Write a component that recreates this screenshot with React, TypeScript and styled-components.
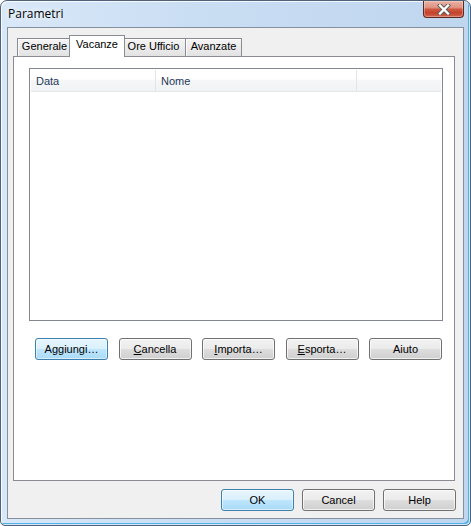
import React from "react";
import styled, { createGlobalStyle } from "styled-components";

const Global = createGlobalStyle`
  html, body { margin: 0; padding: 0; background: #ffffff; }
  body { width: 471px; height: 526px; overflow: hidden; }
  #root { width: 471px; height: 526px; }
`;

const UI_FONT = `"Liberation Sans", Arial, sans-serif`;

const Window = styled.div`
  box-sizing: border-box;
  width: 471px;
  height: 526px;
  display: flex;
  flex-direction: column;
  border: 1px solid #50627a;
  border-radius: 7px 7px 5px 5px;
  background: linear-gradient(to right, #d9e8f8 0%, #cadef3 40%, #bfd6ef 100%);
  box-shadow: inset 1px 1px 0 rgba(255, 255, 255, 0.8),
    inset -1px -1px 0 #d6e7f8, inset -3px -3px 0 -1px #4fb3ea;
  overflow: hidden;
  font-family: ${UI_FONT};
  font-size: 11px;
  color: #000;
`;

const TitleBar = styled.div`
  flex: none;
  height: 26px;
  display: flex;
  align-items: flex-start;
  padding: 0 6px 0 7px;
`;

const Title = styled.span`
  margin-top: 5px;
  font-family: "Open Sans", "Noto Sans", sans-serif;
  font-size: 12px;
  line-height: 16px;
  color: #000;
  text-shadow: 0 0 6px rgba(255, 255, 255, 0.9), 0 0 10px rgba(255, 255, 255, 0.7);
`;

const CloseButton = styled.div`
  margin-left: auto;
  box-sizing: border-box;
  width: 41px;
  height: 17px;
  border: 1px solid #5c2820;
  border-top: none;
  border-radius: 0 0 4px 4px;
  background: linear-gradient(
    #eab0a2 0%,
    #e09483 40%,
    #cf5842 52%,
    #c4412c 75%,
    #d4674f 100%
  );
  box-shadow: inset 0 0 0 1px rgba(255, 255, 255, 0.3);
  display: flex;
  align-items: center;
  justify-content: center;
`;

const Client = styled.div`
  flex: 1;
  margin: 0 6px 6px 6px;
  border: 1px solid #85909e;
  background: #f0f0f0;
  display: flex;
  flex-direction: column;
  padding: 7px 8px 7px 5px;
  min-height: 0;
`;

const TabStrip = styled.div`
  flex: none;
  height: 21px;
  display: flex;
  align-items: flex-end;
  padding-left: 4px;
  position: relative;
  z-index: 1;
`;

const Tab = styled.div<{ $w: number; $selected?: boolean; $first?: boolean }>`
  box-sizing: border-box;
  width: ${(p) => (p.$selected ? p.$w + 4 : p.$w)}px;
  height: ${(p) => (p.$selected ? 22 : 18)}px;
  margin-left: ${(p) => (p.$first ? 0 : p.$selected ? -3 : -1)}px;
  margin-right: ${(p) => (p.$selected ? -3 : 0)}px;
  margin-bottom: ${(p) => (p.$selected ? -1 : 0)}px;
  border: 1px solid #898c95;
  border-bottom: none;
  background: ${(p) =>
    p.$selected
      ? "#ffffff"
      : "linear-gradient(#f4f4f4 0%, #ececec 50%, #e2e2e2 100%)"};
  box-shadow: ${(p) =>
    p.$selected ? "none" : "inset 1px 1px 0 rgba(255,255,255,0.8)"};
  position: relative;
  z-index: ${(p) => (p.$selected ? 2 : 0)};
  text-align: center;
  line-height: ${(p) => (p.$selected ? 17 : 15)}px;
  padding-bottom: ${(p) => (p.$selected ? 4 : 2)}px;
  white-space: nowrap;
  color: #000;
`;

const Panel = styled.div`
  flex: 1;
  min-height: 0;
  border: 1px solid #898c95;
  background: #ffffff;
  padding: 11px 11px 0 15px;
  display: flex;
  flex-direction: column;
`;

const ListView = styled.div`
  flex: none;
  height: 253px;
  box-sizing: border-box;
  border: 1px solid #828790;
  padding: 1px;
  background: #ffffff;
`;

const Header = styled.div`
  display: flex;
  height: 22px;
  box-sizing: border-box;
  border-bottom: 1px solid #e5e5e5;
  background: linear-gradient(#ffffff 0%, #ffffff 45%, #f6f7f8 46%, #f1f2f4 100%);
`;

const HeaderCell = styled.div<{ $w?: number }>`
  ${(p) => (p.$w ? `width: ${p.$w}px; flex: none;` : "flex: 1;")}
  box-sizing: border-box;
  padding: 2px 0 0 5px;
  line-height: 19px;
  color: #1e395b;
  border-right: ${(p) => (p.$w ? "1px solid #e2e4e8" : "none")};
  white-space: nowrap;
`;

const ActionRow = styled.div`
  flex: none;
  margin: 17px 1px 0 6px;
  display: flex;
  justify-content: space-between;
`;

const DialogRow = styled.div`
  flex: none;
  margin: 8px -1px 0 0;
  display: flex;
  justify-content: flex-end;
  gap: 8px;
`;

const Button = styled.div<{ $default?: boolean }>`
  box-sizing: border-box;
  width: 73px;
  height: 22px;
  border: 1px solid ${(p) => (p.$default ? "#3c7fb1" : "#707070")};
  border-radius: 3px;
  background: ${(p) =>
    p.$default
      ? "linear-gradient(#e8f5fc 0%, #d9f0fc 48%, #bee6fd 52%, #a9daf6 100%)"
      : "linear-gradient(#f2f2f2 0%, #ebebeb 48%, #dddddd 52%, #cfcfcf 100%)"};
  box-shadow: inset 0 0 0 1px
    ${(p) => (p.$default ? "rgba(255,255,255,0.55)" : "rgba(255,255,255,0.7)")};
  display: flex;
  align-items: center;
  justify-content: center;
  line-height: 14px;
  padding-bottom: 1px;
  color: #000;
  white-space: nowrap;

  u {
    text-decoration: underline;
    text-underline-offset: 1px;
  }
`;

const CloseGlyph = () => (
  <svg width="14" height="11" viewBox="0 0 14 11">
    <path
      d="M3 1.5 L11 9.5 M11 1.5 L3 9.5"
      stroke="#5a5a5a"
      strokeWidth="4.2"
      strokeLinecap="square"
      fill="none"
    />
    <path
      d="M3 1.5 L11 9.5 M11 1.5 L3 9.5"
      stroke="#ffffff"
      strokeWidth="2.4"
      strokeLinecap="square"
      fill="none"
    />
  </svg>
);

const tabs = [
  { label: "Generale", w: 55 },
  { label: "Vacanze", w: 52, selected: true },
  { label: "Ore Ufficio", w: 65 },
  { label: "Avanzate", w: 57 },
];

export default function App() {
  return (
    <>
      <Global />
      <Window>
        <TitleBar>
          <Title>Parametri</Title>
          <CloseButton>
            <CloseGlyph />
          </CloseButton>
        </TitleBar>
        <Client>
          <TabStrip>
            {tabs.map((t, i) => (
              <Tab key={t.label} $w={t.w} $selected={t.selected} $first={i === 0}>
                {t.label}
              </Tab>
            ))}
          </TabStrip>
          <Panel>
            <ListView>
              <Header>
                <HeaderCell $w={125}>Data</HeaderCell>
                <HeaderCell $w={201}>Nome</HeaderCell>
                <HeaderCell />
              </Header>
            </ListView>
            <ActionRow>
              <Button $default>Aggiungi…</Button>
              <Button>
                <u>C</u>ancella
              </Button>
              <Button>
                <u>I</u>mporta…
              </Button>
              <Button>
                <u>E</u>sporta…
              </Button>
              <Button>Aiuto</Button>
            </ActionRow>
          </Panel>
          <DialogRow>
            <Button $default>OK</Button>
            <Button>Cancel</Button>
            <Button>Help</Button>
          </DialogRow>
        </Client>
      </Window>
    </>
  );
}
